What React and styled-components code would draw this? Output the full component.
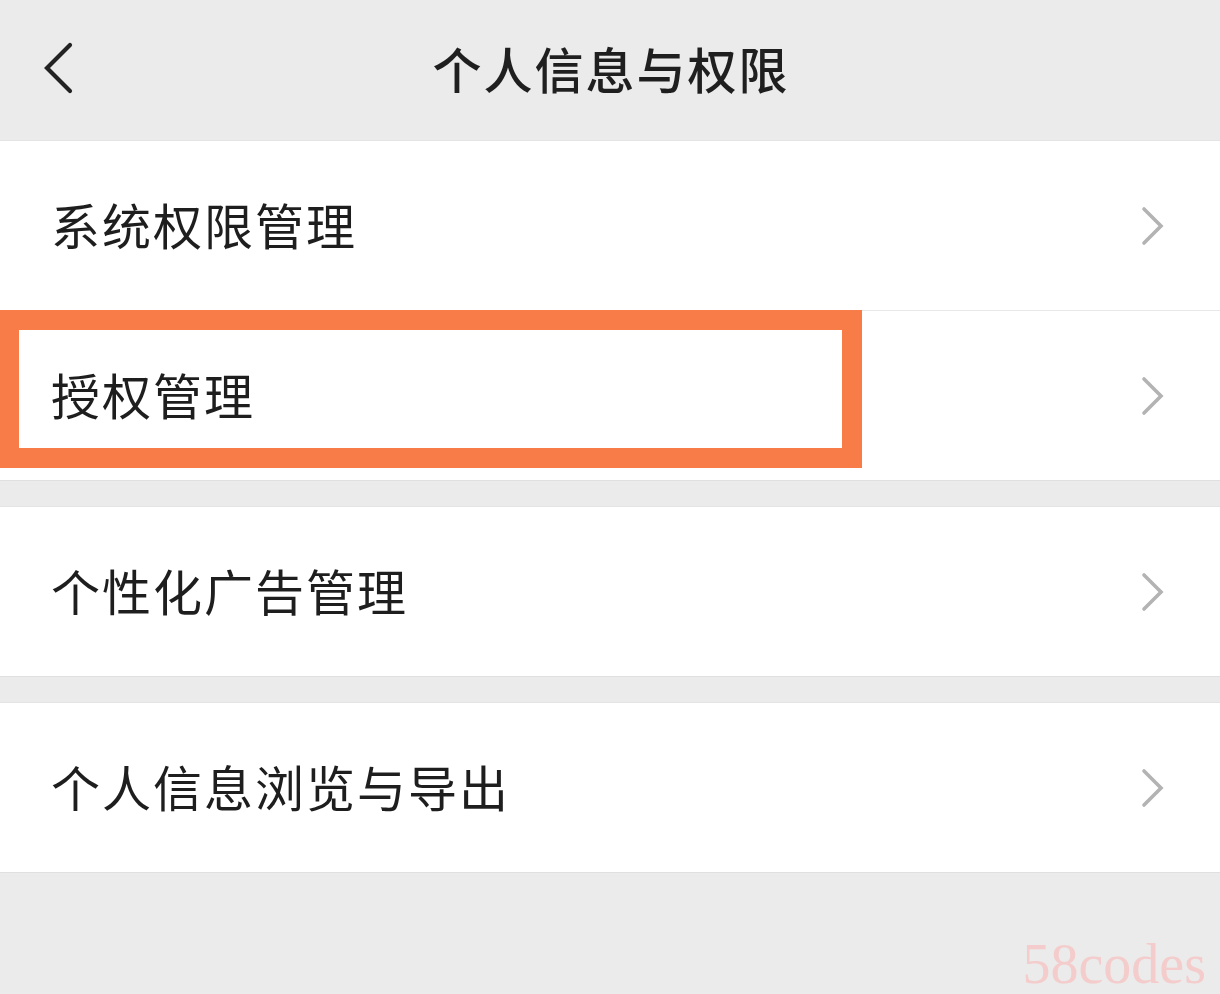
import styled, { createGlobalStyle } from "styled-components"

const Global = createGlobalStyle`
    body {
        margin: 0;
        background: #ebebeb;
        font-family: "Noto Sans CJK SC", "Noto Sans", sans-serif;
    }
`

const groups = [
    ["系统权限管理", "授权管理"],
    ["个性化广告管理"],
    ["个人信息浏览与导出"],
]

function BackIcon() {
    return (
        <svg width="40" height="56" viewBox="0 0 40 56">
            <polyline points="30,5 7,28 30,51" fill="none" stroke="#222" strokeWidth="4.2" strokeLinecap="round" strokeLinejoin="miter" />
        </svg>
    )
}

function Chevron() {
    return (
        <svg width="30" height="42" viewBox="0 0 30 42">
            <polyline points="6,4 23,21 6,38" fill="none" stroke="#b3b3b3" strokeWidth="3.6" strokeLinecap="round" />
        </svg>
    )
}

export default function App() {
    return (
        <Page>
            <Global />
            <Header>
                <Back><BackIcon /></Back>
                <Title>个人信息与权限</Title>
            </Header>
            {groups.map((items, g) => (
                <Group key={g}>
                    {items.map((label, i) => (
                        <Row key={label} divided={i > 0}>
                            <Label>{label}</Label>
                            <Chevron />
                            {label === "授权管理" && <Highlight />}
                        </Row>
                    ))}
                </Group>
            ))}
            <Footer>
                <Watermark>58codes</Watermark>
            </Footer>
        </Page>
    )
}

const Page = styled.div`
    width: 1220px;
    min-height: 994px;
    background: #ebebeb;
    display: flex;
    flex-direction: column;
    gap: 25px;
`

const Header = styled.div`
    position: relative;
    height: 140px;
    display: flex;
    align-items: center;
    justify-content: center;
    margin-bottom: -25px;
`

const Back = styled.div`
    position: absolute;
    left: 40px;
    top: 40px;
`

const Title = styled.div`
    font-size: 49px;
    font-weight: 500;
    color: #1f1f1f;
    letter-spacing: 2px;
    margin: 0 0 6px 2px;
`

const Group = styled.div`
    background: #ffffff;
    border-top: 1px solid #e4e4e4;
    border-bottom: 1px solid #e0e0e0;
`

const Row = styled.div`
    position: relative;
    height: 169px;
    display: flex;
    align-items: center;
    justify-content: space-between;
    padding: 0 52px 0 51px;
    border-top: ${props => props.divided ? "1px solid #e8e8e8" : "none"};
`

const Label = styled.div`
    font-size: 49px;
    color: #1e1e1e;
    letter-spacing: 2px;
    margin-bottom: 4px;
`

const Highlight = styled.div`
    position: absolute;
    left: 0;
    top: -1px;
    width: 862px;
    height: 158px;
    box-sizing: border-box;
    border: 20px solid #f77c48;
    border-left-width: 19px;
    pointer-events: none;
`

const Footer = styled.div`
    flex: 1;
    display: flex;
    align-items: flex-end;
    justify-content: flex-end;
    padding: 0 14px 0 0;
`

const Watermark = styled.div`
    font-family: "Liberation Serif", "DejaVu Serif", serif;
    font-size: 56px;
    line-height: 1;
    color: #f4cccc;
    margin-bottom: 2px;
`
